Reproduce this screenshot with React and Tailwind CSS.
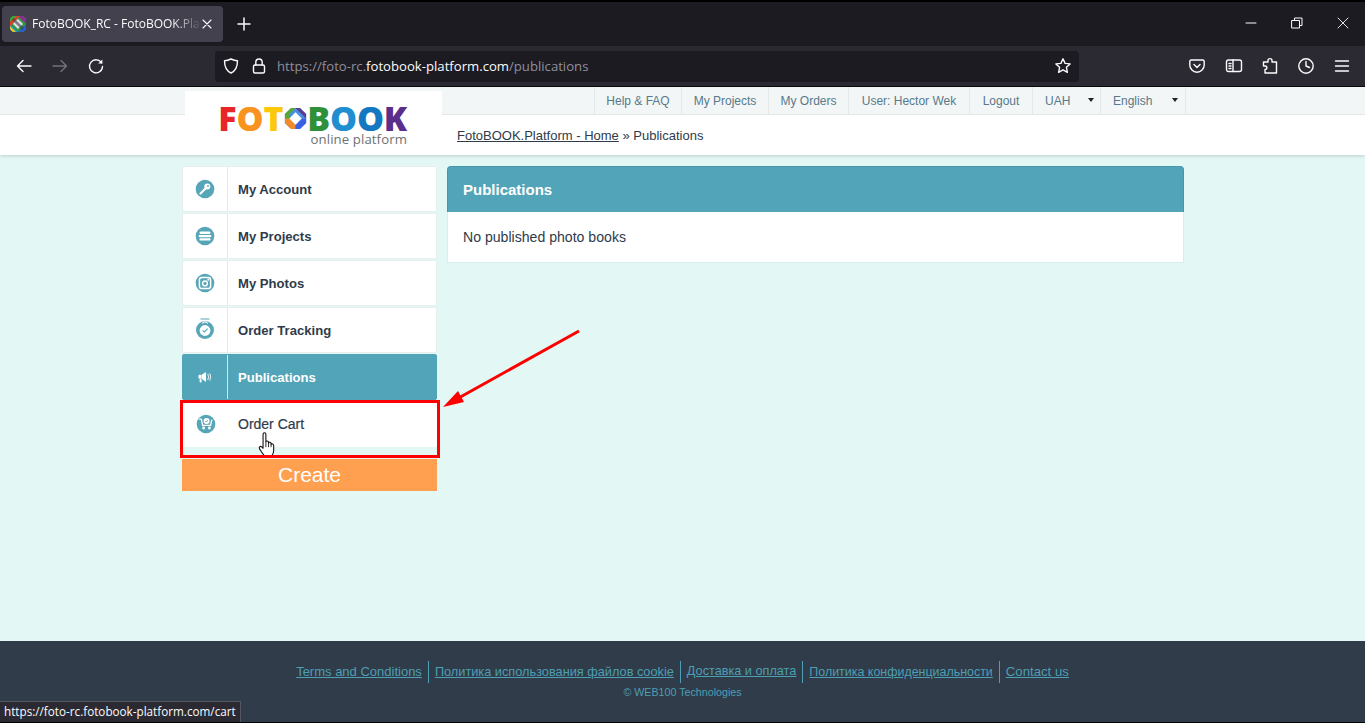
import React from "react";

const ui = { fontFamily: '"Open Sans","Noto Sans",sans-serif' };
const arial = { fontFamily: '"Liberation Sans",Arial,sans-serif' };

function Ico({ children, size = 18, className = "", vb = "0 0 18 18" }) {
  return (
    <svg width={size} height={size} viewBox={vb} fill="none" stroke="currentColor" strokeWidth="1.4" strokeLinecap="round" strokeLinejoin="round" className={className}>
      {children}
    </svg>
  );
}

function Favicon() {
  return (
    <svg width="16" height="16" viewBox="0 0 16 16">
      <defs><clipPath id="fc"><rect width="16" height="16" rx="4.5" /></clipPath></defs>
      <g clipPath="url(#fc)">
        <rect width="16" height="16" fill="#2f9a3e" />
        <path d="M0 8 L8 0 H0Z" fill="#3fa53a" />
        <path d="M8 0 H16 V8Z" fill="#8a2f8e" />
        <path d="M16 8 V16 H8Z" fill="#2a5fd0" />
        <path d="M8 16 H0 V8Z" fill="#1f8fd0" />
        <path d="M0 6 L3 3 L7 0 H10 L0 10Z" fill="#e8392b" />
        <path d="M0 10 L6 16 H2 L0 14Z" fill="#f5c61f" />
        <path d="M5 5 L8 3 L13 8 L8 13 L3 8Z" fill="#e2e2e8" />
        <path d="M4 2 L14 12 L12 14 L2 4Z" fill="#3b3a45" opacity=".6" />
      </g>
    </svg>
  );
}

function Circle({ children }) {
  return (
    <svg width="20" height="20" viewBox="0 0 20 20">
      <circle cx="10" cy="10" r="9.3" fill="#57a6b8" />
      {children}
    </svg>
  );
}

const KeyI = () => (
  <Circle>
    <circle cx="12.3" cy="7.6" r="3" fill="#fff" />
    <path d="M10.5 9.5 L5.5 14.5" stroke="#fff" strokeWidth="2.2" strokeLinecap="round" />
    <circle cx="13" cy="7" r=".9" fill="#57a6b8" />
  </Circle>
);
const ListI = () => (
  <Circle>
    <rect x="4.5" y="5.6" width="11" height="2.4" rx="1.2" fill="#fff" />
    <rect x="3.6" y="9" width="12.8" height="2.2" rx="1" fill="#fff" />
    <rect x="4.5" y="12.2" width="11" height="2.4" rx="1.2" fill="#fff" />
  </Circle>
);
const PhotoI = () => (
  <Circle>
    <rect x="4.4" y="4.4" width="11.2" height="11.2" rx="2.4" fill="none" stroke="#fff" strokeWidth="1.5" />
    <circle cx="10" cy="10.4" r="2.4" fill="none" stroke="#fff" strokeWidth="1.4" />
    <rect x="12.4" y="5.8" width="1.8" height="1.8" fill="#fff" />
  </Circle>
);
const TrackI = () => (
  <svg width="20" height="23" viewBox="0 0 20 23" className="mt-[-3px]">
    <circle cx="10" cy="13" r="9" fill="#57a6b8" />
    <path d="M5.5 2 H14.5" stroke="#57a6b8" strokeWidth="1" />
    <circle cx="10" cy="13.5" r="5.4" fill="#fff" />
    <path d="M7.2 6.4 Q10 3.4 12.8 6.4" fill="none" stroke="#fff" strokeWidth="1.2" />
    <path d="M7.6 13.4 L9.4 15 L12.6 11.6" fill="none" stroke="#57a6b8" strokeWidth="1.1" />
  </svg>
);
const MegaI = () => (
  <svg width="14" height="13" viewBox="0 0 14 13">
    <rect x="0.5" y="3.8" width="3" height="4" rx="1.2" fill="#fff" />
    <path d="M3.6 3.8 L8 1 V11 L3.6 7.8Z" fill="#fff" />
    <rect x="1.6" y="8" width="2" height="3.5" rx=".8" fill="#fff" />
    <path d="M9.8 3 Q11.4 6 9.8 9 M11.8 2.4 Q13.6 6 11.8 9.6" fill="none" stroke="#fff" strokeWidth="1" opacity=".85" />
  </svg>
);
const CartI = () => (
  <Circle>
    <path d="M3.6 5.2 H5.4 L6.6 11.4 H14.6 L15.8 6.2" fill="none" stroke="#fff" strokeWidth="1.3" strokeLinecap="round" strokeLinejoin="round" />
    <circle cx="10.6" cy="7" r="3" fill="#fff" />
    <path d="M9.3 7 L10.3 8 L12 6" fill="none" stroke="#57a6b8" strokeWidth=".9" />
    <circle cx="7.6" cy="14" r="1.4" fill="#fff" />
    <circle cx="13.4" cy="14" r="1.4" fill="#fff" />
  </Circle>
);

function Hand() {
  return (
    <svg width="19" height="26" viewBox="0 0 17 24" className="absolute left-[75px] top-[30px]">
      <path
        d="M4.4 2 C4.4 .3 7 .3 7 2 V9 C7 8 9.4 8 9.4 9.4 V10.2 C9.6 9.2 11.8 9.2 11.8 10.8 V11.4 C12.2 10.6 14.2 10.8 14.2 12.4 V17 C14.2 19 13.6 20 13 21 V23 H5.4 V21.6 C4 20.4 3 18.4 1.2 15.6 C.2 14 2 12.6 3.2 13.8 L4.4 15 Z"
        fill="#fff" stroke="#111" strokeWidth="1" strokeLinejoin="round"
      />
      <path d="M7 9 V14 M9.4 10 V14 M11.8 11 V14" stroke="#111" strokeWidth=".8" />
    </svg>
  );
}

function Logo() {
  const L = ({ c, children }) => <span style={{ color: c }}>{children}</span>;
  return (
    <div className="flex flex-col items-end w-[188px]">
      <div className="flex items-center h-[26px] text-[34px] font-extrabold leading-none tracking-[-0.2px] whitespace-nowrap" style={{ fontFamily: '"Open Sans",sans-serif' }}>
        <L c="#e8262a">F</L><L c="#f7931e">O</L><L c="#fdc70c">T</L>
        <svg width="23" height="23" viewBox="0 0 26 26" className="mx-[0.5px] shrink-0">
          <path d="M8 1 H18 L25 8 V18 L18 25 H8 L1 18 V8Z" fill="#4c8fe0" />
          <path d="M8 1 H13 L5 9 L9 13 L1 13 V8Z" fill="#57a82d" />
          <path d="M13 1 H18 L25 8 V13 L13 1Z" fill="#5b3a94" />
          <path d="M1 13 H9 L13 21 L13 25 H8 L1 18Z" fill="#f08a2b" />
          <path d="M13 25 L13 21 L21 13 H25 V18 L18 25Z" fill="#3b5fe0" />
          <path d="M13 6 L20 13 L13 20 L6 13Z" fill="#fff" />
        </svg>
        <L c="#2e9038">B</L><L c="#1f8fd0">O</L><L c="#1478c0">O</L><L c="#5c2e8c">K</L>
      </div>
      <div className="mt-[2px] text-[13.2px] leading-[13px] tracking-[0.1px] text-[#6f7273]" style={{ fontFamily: '"Open Sans",sans-serif' }}>online platform</div>
    </div>
  );
}

const navItems = [
  ["Help & FAQ", 87], ["My Projects", 87], ["My Orders", 80], ["User: Hector Wek", 121], ["Logout", 63],
];

const sideItems = [
  ["My Account", KeyI], ["My Projects", ListI], ["My Photos", PhotoI], ["Order Tracking", TrackI],
];

function SideRow({ label, Icon, active, plain, children }) {
  const bg = active ? "bg-[#52a4b8] text-white border-[#52a4b8]" : plain ? "bg-white text-[#2f3b4a] border-white" : "bg-white text-[#2f3b4a] border-[#e6efee]";
  const sep = plain ? "" : active ? "border-r border-[#cfe8ec]" : "border-r border-[#e4e9e9]";
  return (
    <div className={`relative flex h-[46px] w-[255px] rounded-[2px] border ${bg}`}>
      <div className={`w-[45px] shrink-0 flex items-center justify-center ${sep}`}>
        <Icon />
      </div>
      <div className={`pl-[10px] pt-[1px] flex items-center ${plain ? "text-[14px]" : "text-[13.1px] font-bold"}`} style={plain ? { WebkitTextStroke: "0.2px #2f3b4a" } : undefined}>{label}</div>
      {children}
    </div>
  );
}

const links = [
  ["Terms and Conditions", "text-[13px]"],
  ["Политика использования файлов cookie", "text-[12.75px]"],
  ["Доставка и оплата", "text-[12.7px]"],
  ["Политика конфиденциальности", "text-[12.45px]"],
  ["Contact us", "text-[13.2px]"],
];

export default function App() {
  return (
    <div className="relative flex flex-col h-[723px] w-[1365px] overflow-hidden bg-[#e3f7f4]" style={arial}>
      {/* Browser chrome */}
      <div className="h-[2px] bg-black" />
      <div className="h-[44px] bg-[#1c1b22] flex items-start pl-[2px] pt-[4px] text-[#fbfbfe]" style={ui}>
        <div className="w-[221px] h-[36px] bg-[#42414d] rounded-[4px] flex items-center pl-[8px]">
          <Favicon />
          <span className="ml-[6px] w-[170px] text-[12px] whitespace-nowrap overflow-hidden [mask-image:linear-gradient(to_right,black_82%,transparent)]">FotoBOOK_RC - FotoBOOK.Platform</span>
          <Ico size={12} className="ml-[-1px]" vb="0 0 12 12"><path d="M2 2 L10 10 M10 2 L2 10" strokeWidth="1.1" /></Ico>
        </div>
        <div className="ml-[13px] w-[16px] h-[36px] flex items-center justify-center">
          <Ico size={14} vb="0 0 14 14"><path d="M7 1 V13 M1 7 H13" strokeWidth="1.5" /></Ico>
        </div>
        <div className="ml-auto flex items-center h-[36px] pb-[2px]">
          <Ico size={12} vb="0 0 12 12"><path d="M1 6 H11" strokeWidth="1" /></Ico>
          <Ico size={12} className="ml-[34px]" vb="0 0 12 12"><path d="M1 3.5 H8.5 V11 H1Z M3.5 3.5 V1 H11 V8.5 H8.5" strokeWidth="1" /></Ico>
          <Ico size={12} className="ml-[34px] mr-[16px]" vb="0 0 12 12"><path d="M1 1 L11 11 M11 1 L1 11" strokeWidth=".9" /></Ico>
        </div>
      </div>
      <div className="h-[40px] bg-[#2b2a33] flex items-center text-[#fbfbfe]" style={ui}>
        <Ico className="ml-[15px]" vb="0 0 18 18"><path d="M16 9 H2.5 M8 3.5 L2.5 9 L8 14.5" /></Ico>
        <Ico className="ml-[18px] text-[#72717a]" vb="0 0 18 18"><path d="M2 9 H15.5 M10 3.5 L15.5 9 L10 14.5" /></Ico>
        <Ico className="ml-[18px]" vb="0 0 18 18"><path d="M14.6 6 A6.5 6.5 0 1 0 15.5 9.5" /><path d="M15.4 2.4 V6.6 H11.2 Z" fill="currentColor" stroke="none" /></Ico>
        <div className="ml-[110px] w-[864px] h-[31px] bg-[#1c1b22] rounded-[4px] flex items-center pl-[7px]">
          <Ico vb="0 0 18 18"><path d="M9 2 C11 3 13.5 3.7 15.5 3.8 C15.5 9.5 14 13.8 9 16 C4 13.8 2.5 9.5 2.5 3.8 C4.5 3.7 7 3 9 2Z" /></Ico>
          <Ico className="ml-[10px]" vb="0 0 18 18"><rect x="3.5" y="8" width="11" height="8" rx="1.5" /><path d="M5.8 8 V5.2 A3.2 3.2 0 0 1 12.2 5.2 V8" /></Ico>
          <div className="ml-[9px] pt-[2px] text-[13.15px] whitespace-nowrap text-[#8f8f9d]">https://foto-rc.<span className="text-[#fbfbfe]">fotobook-platform.com</span>/publications</div>
          <Ico className="ml-auto mr-[7px]" vb="0 0 18 18"><path d="M9 1.8 L11.1 6.4 L16.1 6.9 L12.4 10.3 L13.4 15.3 L9 12.8 L4.6 15.3 L5.6 10.3 L1.9 6.9 L6.9 6.4Z" /></Ico>
        </div>
        <div className="ml-[109px] flex items-center">
          <Ico vb="0 0 18 18"><path d="M3 3 H15 A1.5 1.5 0 0 1 16.2 4.5 V8 A7.2 7.2 0 0 1 1.8 8 V4.5 A1.5 1.5 0 0 1 3 3Z" /><path d="M6 7.5 L9 10.5 L12 7.5" /></Ico>
          <Ico className="ml-[19px]" vb="0 0 18 18"><rect x="1.5" y="3" width="15" height="11.5" rx="2" /><path d="M8 3 V14.5 M4 6.5 H6 M4 9 H6 M4 11.5 H6" /></Ico>
          <Ico className="ml-[18px]" vb="0 0 18 18"><path d="M7 3.5 C7 1 11 1 11 3.5 V5 H15.5 V16 H4 V12.5 C6.5 12.5 6.5 9 4 9 H2.5 V5 H7Z" /></Ico>
          <Ico className="ml-[18px]" vb="0 0 18 18"><circle cx="9" cy="9" r="7.2" /><path d="M9 4.5 V9 L12.5 10.5" /></Ico>
          <Ico className="ml-[18px]" vb="0 0 18 18"><path d="M2.5 4 H15.5 M2.5 9 H15.5 M2.5 14 H15.5" /></Ico>
        </div>
      </div>
      <div className="h-[1px] bg-black" />

      {/* Site header */}
      <header className="flex h-[68px] bg-white shadow-[0_1px_3px_rgba(120,150,150,0.35)] z-10">
        <div className="w-[185px] flex flex-col">
          <div className="h-[28px] bg-[#f2f6f6] border-b border-[#e4e8e8]" />
        </div>
        <div className="w-[257px] flex flex-col">
          <div className="h-[4px] bg-[#f2f6f6]" />
          <div className="flex-1 bg-white rounded-t-[4px] pl-[34px] pt-[14px]"><Logo /></div>
        </div>
        <div className="flex-1 flex flex-col">
          <div className="h-[28px] bg-[#f2f6f6] border-b border-[#e4e8e8] flex pl-[152px] text-[12px] text-[#57798a]">
            <div className="flex border-l border-[#e4e8e8]">
              {navItems.map(([t, w]) => (
                <div key={t} style={{ width: w }} className="flex items-center justify-center border-r border-[#e4e8e8]">{t}</div>
              ))}
              <div className="w-[68px] flex items-center pl-[12px] relative border-r border-[#e4e8e8]">UAH<span className="absolute right-[6px] top-[11px] border-x-[3.5px] border-x-transparent border-t-[4px] border-t-[#222]" /></div>
              <div className="w-[85px] flex items-center pl-[12px] relative border-r border-[#e4e8e8]">English<span className="absolute right-[7px] top-[11px] border-x-[3.5px] border-x-transparent border-t-[4px] border-t-[#222]" /></div>
            </div>
          </div>
          <div className="flex-1 pl-[15px] pt-[13px] text-[13px] leading-[16px] text-[#2f3b4a]">
            <span className="underline">FotoBOOK.Platform - Home</span> » Publications
          </div>
        </div>
      </header>

      {/* Content */}
      <main className="flex-1 pt-[11px] pl-[182px] flex gap-[10px] items-start">
        <aside className="w-[255px] flex flex-col gap-[1px] relative">
          {sideItems.map(([l, I]) => <SideRow key={l} label={l} Icon={I} />)}
          <SideRow label="Publications" Icon={MegaI} active />
          <SideRow label="Order Cart" Icon={CartI} plain><Hand /></SideRow>
          <div className="h-[32px] mt-[11px] bg-[#ff9f50] text-white text-[21px] flex items-center justify-center">Create</div>
          {/* red annotation box */}
          <div className="absolute left-[-2px] top-[234px] w-[260px] h-[58px] border-[3px] border-[#f00] pointer-events-none" />
        </aside>
        <section className="w-[737px]">
          <div className="h-[46px] bg-[#52a4b8] rounded-t-[4px] border-t border-x border-[#4796aa] flex items-center pl-[15px] pt-[1px] text-white font-bold text-[15px]">Publications</div>
          <div className="h-[51px] bg-white border-b border-x border-[#d9eeea] flex items-center pl-[15px] pt-[1px] text-[14.1px] text-[#2f3b4a]">No published photo books</div>
        </section>
      </main>

      {/* Arrow annotation */}
      <svg width="150" height="90" viewBox="0 0 150 90" className="absolute left-[437px] top-[325px] pointer-events-none">
        <path d="M142 6 L18 75" stroke="#f00" strokeWidth="3" />
        <path d="M6 82 L21 66 L27 77Z" fill="#f00" />
      </svg>

      {/* Footer */}
      <footer className="h-[82px] bg-[#303c49] border-b border-black flex flex-col items-center pt-[20px]">
        <div className="flex h-[22px] items-center text-[#4d9fb3]">
          {links.map(([l, size], i) => (
            <div key={l} className={`h-[22px] flex items-center ${size} ${i ? "border-l border-[#4d9fb3] ml-[6px] pl-[6px]" : ""}`}>
              <span className="underline">{l}</span>
            </div>
          ))}
        </div>
        <div className="mt-[2px] text-[10.7px] leading-[14px] text-[#4d9fb3]">© WEB100 Technologies</div>
      </footer>

      {/* Status tooltip */}
      <div className="absolute left-0 bottom-[1px] w-[241px] h-[21px] bg-[#2b2a33] border-t border-r border-[#55555f] pl-[4px] flex items-center text-[11.7px] text-[#fbfbfe] whitespace-nowrap" style={ui}>
        https://foto-rc.fotobook-platform.com/cart
      </div>
    </div>
  );
}
